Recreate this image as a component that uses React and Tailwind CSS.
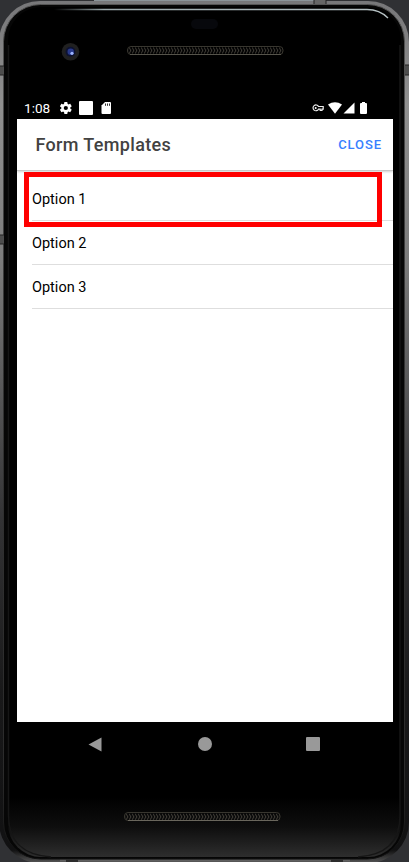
const options = ["Option 1", "Option 2", "Option 3"];

function Frame() {
  return (
    <svg className="absolute inset-0" width="409" height="862" viewBox="0 0 409 862">
      <defs>
        <linearGradient id="rim" x1="0" y1="0" x2="0" y2="1">
          <stop offset="0" stopColor="#777779" />
          <stop offset=".12" stopColor="#909090" />
          <stop offset=".3" stopColor="#7c7c7c" />
          <stop offset=".6" stopColor="#333335" />
          <stop offset=".8" stopColor="#19191a" />
          <stop offset=".985" stopColor="#111112" />
          <stop offset="1" stopColor="#565656" />
        </linearGradient>
        <linearGradient id="glass" x1="0" y1="0" x2="0" y2="1">
          <stop offset=".93" stopColor="#000" />
          <stop offset=".965" stopColor="#0e0e0e" />
          <stop offset="1" stopColor="#2e2e2e" />
        </linearGradient>
        <linearGradient id="edge" x1="0" y1="0" x2="0" y2="1">
          <stop offset="0" stopColor="#555" />
          <stop offset=".4" stopColor="#333" />
          <stop offset=".9" stopColor="#2b2b2b" />
          <stop offset="1" stopColor="#111" />
        </linearGradient>
        <linearGradient id="shine" x1="0" y1="0" x2="1" y2="0">
          <stop offset="0" stopColor="#9ba8ab" stopOpacity="0" />
          <stop offset=".15" stopColor="#9ba8ab" />
          <stop offset="1" stopColor="#b5c0c2" />
        </linearGradient>
        <pattern id="mesh" width="3" height="8" y="46.5" patternUnits="userSpaceOnUse">
          <path d="M0 1L2 4L0 7" fill="none" stroke="#48443d" strokeWidth="1" />
        </pattern>
        <pattern id="meshBottom" width="3" height="8" y="812.8" patternUnits="userSpaceOnUse">
          <path d="M0 1L2 4L0 7" fill="none" stroke="#48443d" strokeWidth="1" />
        </pattern>
      </defs>
      <rect width="409" height="862" fill="#303134" />
      <rect x="-1" y="1" width="410" height="862" rx="41" fill="url(#rim)" />
      <path d="M60 860.5H350" stroke="#606060" strokeWidth="2" />
      <rect x="3.5" y="4.5" width="401" height="854.5" rx="37" fill="#060606" stroke="url(#edge)" />
      <rect x="8" y="7" width="393" height="850" rx="33" fill="url(#glass)" />
      <path d="M54 9.5H367C377 9.5 383 13 388 18" fill="none" stroke="url(#shine)" strokeWidth="1.4" />
      <path d="M8.5 45V815C8.5 843 24 855 51 857M400 45V815C400 843 385 855 358 857" fill="none" stroke="#161616" strokeWidth="1.5" />
      <path d="M94 .5H314" stroke="#8b9499" strokeWidth="1" />
      <path d="M314 0h12v4h-12z" fill="#666" />
      <path d="M0 66h4v9H0zM0 235h4v9H0zM405 65h4v10h-4z" fill="#4d4d4d" />
      <path d="M0 66h4M0 75h4M0 235h4M0 244h4M405 65h4M405 75h4M314 0v4M326 0v4" stroke="#252525" strokeWidth="1" />
      <path d="M66 859.5h12v3H66zM331 859.5h12v3h-12z" fill="#2b2b2b" />
      <rect x="191" y="19" width="27" height="10" rx="5" fill="#07080c" />
      <circle cx="70.5" cy="51.7" r="8.8" fill="#202020" />
      <circle cx="70.5" cy="51.7" r="5" fill="#0d1230" />
      <circle cx="70.7" cy="51.8" r="3.2" fill="#27388a" />
      <circle cx="72" cy="53.3" r="1.6" fill="#9eb5ff" />
      <rect x="127.5" y="46.5" width="155.5" height="8" rx="3.5" fill="url(#mesh)" stroke="#38362f" />
      <path d="M130 54.5H281" stroke="#55534a" />
      <rect x="124.5" y="812.5" width="155.5" height="8" rx="3.5" fill="url(#meshBottom)" stroke="#38362f" />
      <path d="M128 820.5H278" stroke="#69665c" />
    </svg>
  );
}

function StatusBar() {
  return (
    <div className="flex h-[22px] shrink-0 items-center text-white">
      <span className="ml-[7px] w-[36px] pt-[1px] text-[13.6px] leading-none">1:08</span>
      <svg width="12" height="12" viewBox="2 2 20 20" fill="currentColor">
        <path d="M19.1 13l.1-1-.1-1 2.1-1.6c.2-.2.3-.4.1-.7l-2-3.4c-.1-.3-.4-.3-.6-.2l-2.5 1-1.6-1L14.2 2.5c0-.3-.2-.5-.5-.5h-4c-.2 0-.4.2-.5.5l-.4 2.6-1.6 1-2.5-1c-.2-.1-.5 0-.6.2l-2 3.4c-.1.3-.1.5.1.7L4.3 11v2l-2.1 1.6c-.2.2-.2.5-.1.7l2 3.4c.1.3.4.3.6.2l2.5-1 1.6 1 .4 2.6c.1.3.3.5.5.5h4c.3 0 .5-.2.5-.5l.4-2.6 1.6-1 2.5 1c.3.1.5 0 .6-.2l2-3.4c.1-.3.1-.5-.1-.7zM11.7 15.5a3.5 3.5 0 110-7 3.5 3.5 0 010 7z" />
      </svg>
      <span className="ml-[7px] size-[14px] rounded-[1px] bg-white" />
      <svg className="ml-[8px]" width="11" height="12" viewBox="0 0 11 12">
        <path d="M4 0h5q1 0 1 1v10q0 1-1 1H1.5q-1 0-1-1V3.5z" fill="#fff" />
        <path d="M4.5 1.5v2.3M6.5 1.5v2.3M8.5 1.5v2.3" stroke="#000" strokeWidth=".8" />
      </svg>
      <svg className="ml-auto" width="12" height="8" viewBox="0 0 12 8">
        <path d="M6.5 2.5H11.2V5.2H10V6.3H8.2V5.2H6.5A2.9 2.9 0 116.5 2.5z" fill="none" stroke="#eee" strokeWidth="1.2" />
        <circle cx="3.7" cy="3.9" r="1" fill="#fff" />
      </svg>
      <svg className="ml-[4px]" width="14" height="12" viewBox="0 0 14 12"><path d="M0 2.6Q7-2.2 14 2.6L7 11.8z" fill="#fff" /></svg>
      <svg className="ml-[1px]" width="12" height="12" viewBox="0 0 12 12"><path d="M11.5.5v11H.5z" fill="#fff" /></svg>
      <svg className="ml-[5px] mr-[26px]" width="7" height="12" viewBox="0 0 7 12"><path d="M2 0h3v1h1q1 0 1 1v9q0 1-1 1H1q-1 0-1-1V2q0-1 1-1h1z" fill="#fff" /></svg>
    </div>
  );
}

export default function App() {
  return (
    <div className="relative h-[862px] w-[412px] overflow-hidden bg-white font-['Roboto',sans-serif]">
      <Frame />
      <div className="relative ml-[17px] flex h-[862px] w-[376px] flex-col pt-[97px]">
        <StatusBar />
        <main className="relative h-[603px] shrink-0 bg-white">
          <header className="flex h-[52px] items-center justify-between border-b border-[#c8c8c8] pl-[18.4px] pr-[11px] shadow-[0_1px_2px_rgba(0,0,0,0.18)]">
            <h1 className="text-[18px] font-medium tracking-[0.36px] text-[#424242]">Form Templates</h1>
            <button className="pt-[1px] text-[13px] font-medium tracking-[0.9px] text-[#3880ff]">CLOSE</button>
          </header>
          <ul className="pl-[15px] pt-[6px]">
            {options.map((option) => (
              <li key={option} className="flex h-[44px] items-center border-b border-[#dedede] pt-[2px] text-[14.5px] text-black">{option}</li>
            ))}
          </ul>
          <div className="absolute left-[7px] top-[53px] h-[55px] w-[358px] border-[5px] border-[#ff0000]" />
        </main>
        <nav className="flex h-[44px] shrink-0 items-center pl-[71px]">
          <svg width="14" height="15" viewBox="0 0 14 15"><path d="M.5 7.5L13.5.5v14z" fill="#999" /></svg>
          <span className="ml-[96px] size-[14px] rounded-full bg-[#999]" />
          <span className="ml-[94px] size-[14px] rounded-[1px] bg-[#999]" />
        </nav>
      </div>
    </div>
  );
}
